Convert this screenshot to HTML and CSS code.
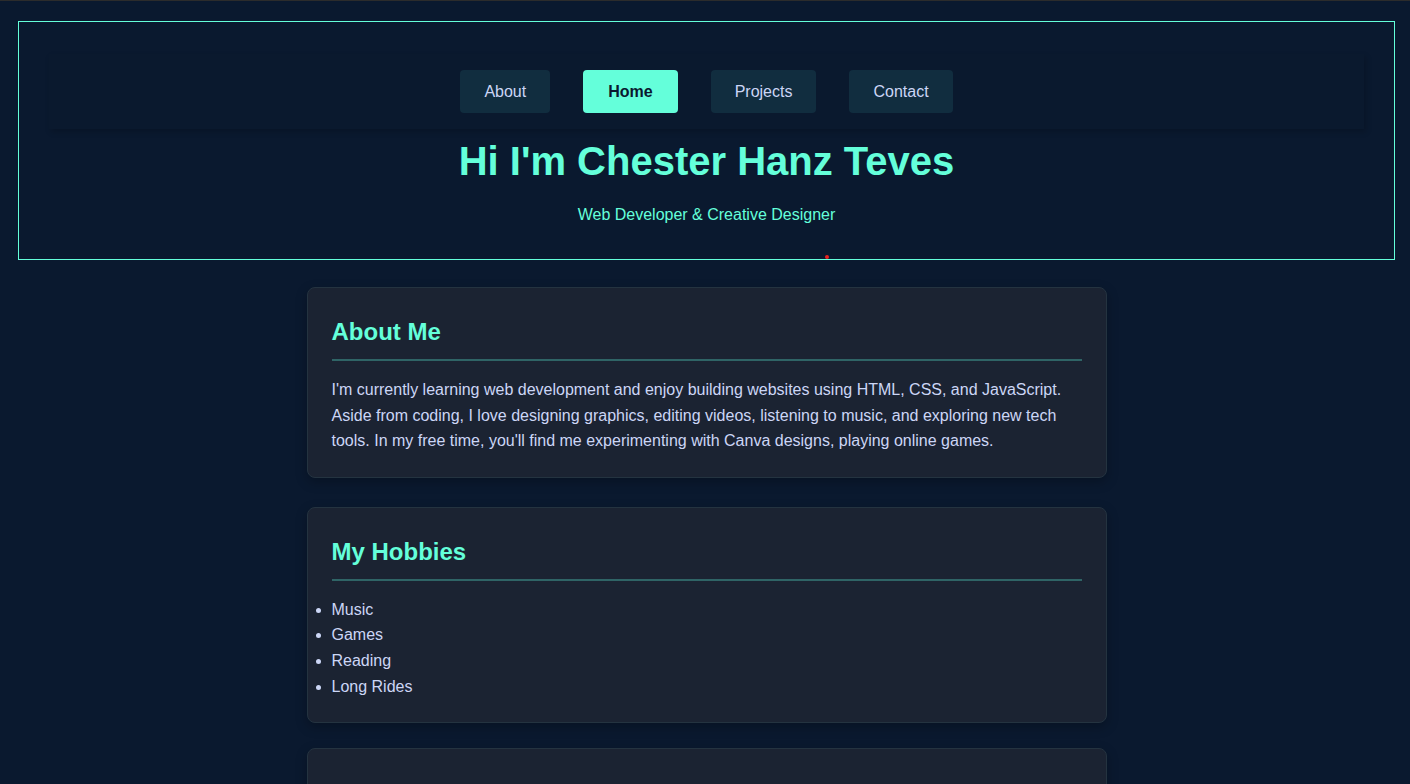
FILE: index.html
```html
<!DOCTYPE html>
<html lang="en">
<head>
<meta charset="utf-8">
<title>Chester Hanz Teves</title>
<link rel="stylesheet" href="styles.css">
</head>
<body>
<header class="hero">
  <nav class="nav">
    <a class="nav-btn" href="#about">About</a>
    <a class="nav-btn active" href="#home">Home</a>
    <a class="nav-btn" href="#projects">Projects</a>
    <a class="nav-btn" href="#contact">Contact</a>
  </nav>
  <h1 class="hero-title">Hi I'm Chester Hanz Teves</h1>
  <p class="hero-sub">Web Developer &amp; Creative Designer</p>
  <span class="dot"></span>
</header>
<main class="content">
  <section class="card card-about">
    <h2 class="card-title">About Me</h2>
    <p class="card-text">I'm currently learning web development and enjoy building websites using HTML, CSS, and JavaScript. Aside from coding, I love designing graphics, editing videos, listening to music, and exploring new tech tools. In my free time, you'll find me experimenting with Canva designs, playing online games.</p>
  </section>
  <section class="card card-hobbies">
    <h2 class="card-title">My Hobbies</h2>
    <ul class="hobby-list">
      <li>Music</li>
      <li>Games</li>
      <li>Reading</li>
      <li>Long Rides</li>
    </ul>
  </section>
  <section class="card card-next"></section>
</main>
</body>
</html>
```

FILE: styles.css
```css
* { box-sizing: border-box; }

html, body {
  background: #0a192f;
}

body {
  margin: 0;
  border-top: 1px solid #2c2c2c;
  font-family: "Liberation Sans", Arial, sans-serif;
  color: #ccd6f6;
  font-size: 16px;
  overflow: hidden;
}

.hero {
  position: relative;
  margin: 20px 15px 0 18px;
  border: 1px solid #64ffda;
  padding: 32px 30px 35px;
  text-align: center;
}

.nav {
  display: flex;
  justify-content: center;
  gap: 33px;
  padding: 16px 0;
  background: #0a192e;
  box-shadow: 2px 3px 6px rgba(0, 0, 0, 0.18);
  margin-bottom: 9px;
}

.nav-btn {
  display: block;
  padding: 12px 24px;
  line-height: 19px;
  background: #112d3f;
  color: #ccd6f6;
  text-decoration: none;
  border-radius: 4px;
  font-size: 16px;
}

.nav-btn.active {
  background: #64ffda;
  color: #0a192f;
  font-weight: bold;
  padding: 12px 25px;
}

.hero-title {
  margin: 0 0 22px;
  font-size: 40px;
  line-height: 46px;
  font-weight: bold;
  color: #64ffda;
}

.hero-sub {
  margin: 0;
  font-size: 16px;
  line-height: 18px;
  color: #64ffda;
}

.dot {
  position: absolute;
  left: 806px;
  bottom: 0;
  width: 4px;
  height: 4px;
  border-radius: 50%;
  background: #e8231f;
}

.content {
  margin: 27px 15px 0 18px;
  display: flex;
  flex-direction: column;
  align-items: center;
}

.card {
  width: 800px;
  background: #1b2332;
  border: 1px solid #243340;
  border-radius: 8px;
  padding: 24px 24px 23px;
  box-shadow: 0 4px 12px rgba(0, 0, 0, 0.25);
}

.card-about { margin-bottom: 29px; }
.card-hobbies { margin-bottom: 25px; }

.card-title {
  margin: 5px 0 16px;
  padding-bottom: 13px;
  font-size: 24px;
  line-height: 29px;
  color: #64ffda;
  border-bottom: 2px solid #2f6466;
}

.card-text {
  margin: 0;
  line-height: 25.6px;
  color: #ccd6f6;
}

.hobby-list {
  margin: 0;
  padding: 0;
  line-height: 25.6px;
  color: #ccd6f6;
}

.card-next { height: 120px; flex-shrink: 0; }
```
